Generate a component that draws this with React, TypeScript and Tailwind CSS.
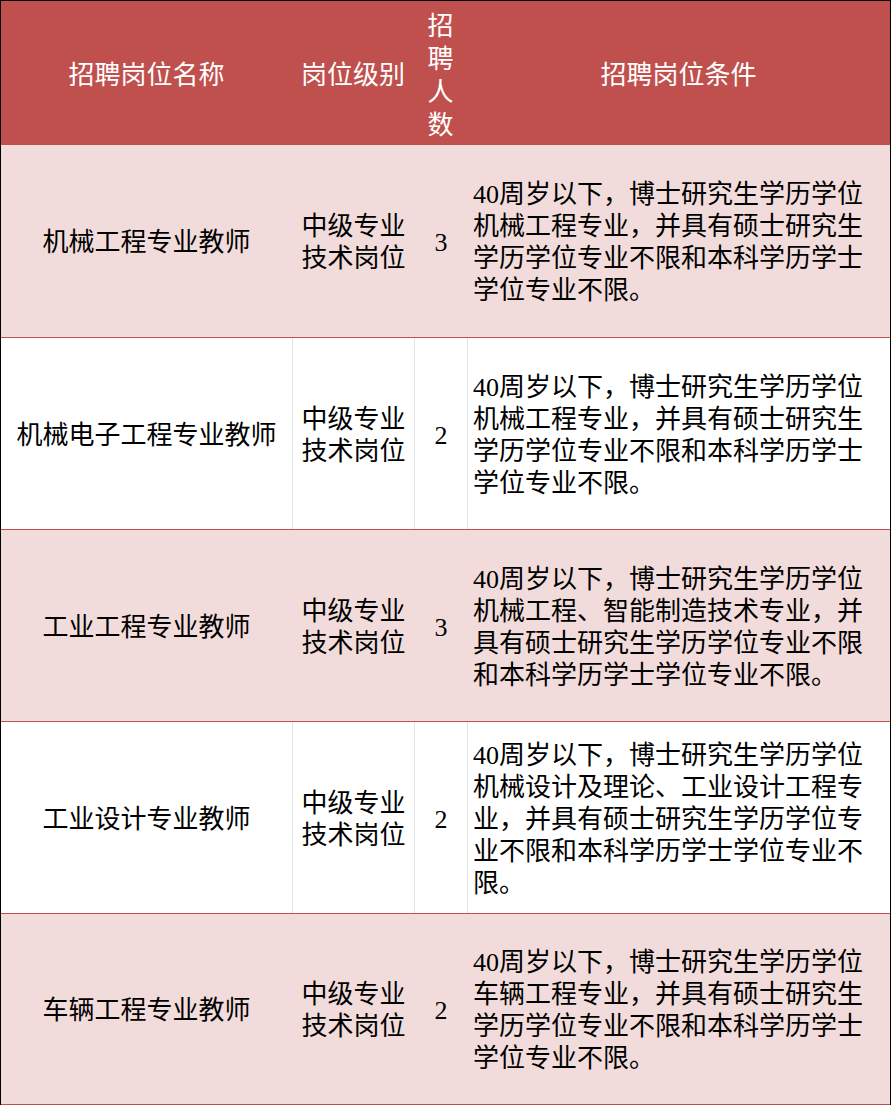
import React from "react";

const rows = [
  {
    name: "机械工程专业教师",
    count: "3",
    cond: "40周岁以下，博士研究生学历学位机械工程专业，并具有硕士研究生学历学位专业不限和本科学历学士学位专业不限。",
  },
  {
    name: "机械电子工程专业教师",
    count: "2",
    cond: "40周岁以下，博士研究生学历学位机械工程专业，并具有硕士研究生学历学位专业不限和本科学历学士学位专业不限。",
  },
  {
    name: "工业工程专业教师",
    count: "3",
    cond: "40周岁以下，博士研究生学历学位机械工程、智能制造技术专业，并具有硕士研究生学历学位专业不限和本科学历学士学位专业不限。",
  },
  {
    name: "工业设计专业教师",
    count: "2",
    cond: "40周岁以下，博士研究生学历学位机械设计及理论、工业设计工程专业，并具有硕士研究生学历学位专业不限和本科学历学士学位专业不限。",
  },
  {
    name: "车辆工程专业教师",
    count: "2",
    cond: "40周岁以下，博士研究生学历学位车辆工程专业，并具有硕士研究生学历学位专业不限和本科学历学士学位专业不限。",
  },
];

const font = { fontFamily: '"Liberation Serif", "Noto Sans CJK SC", serif' };

export default function App() {
  return (
    <div
      className="w-[891px] h-[1105px] bg-white text-[26px] leading-[32px] text-black border-l border-r border-t border-black overflow-hidden"
      style={font}
    >
      {/* header */}
      <div className="grid grid-cols-[291px_122px_53px_423px] h-[144px] bg-[#c0504d] text-white pt-[5px]">
        <div className="flex items-center justify-center">招聘岗位名称</div>
        <div className="flex items-center justify-center">岗位级别</div>
        <div className="flex flex-col items-center justify-center leading-[33px]">
          <span>招</span>
          <span>聘</span>
          <span>人</span>
          <span>数</span>
        </div>
        <div className="flex items-center justify-center">招聘岗位条件</div>
      </div>

      {rows.map((r, i) => {
        const pink = i % 2 === 0;
        const line = pink ? "border-l-[#f2dcdb]" : "border-l-[#e3e3e3]";
        return (
          <div
            key={i}
            className={`grid grid-cols-[291px_122px_53px_423px] h-[192px] border-[#c0504d] pt-[4px] ${
              i > 0 ? "border-t" : ""
            } ${i === rows.length - 1 ? "border-b" : ""} ${pink ? "bg-[#f2dcdb]" : "bg-white"}`}
          >
            <div className="flex items-center justify-center whitespace-nowrap">{r.name}</div>
            <div className={`flex items-center justify-center text-center border-l ${line} -mt-[4px] pt-[4px]`}>
              <div className="w-[104px]">中级专业技术岗位</div>
            </div>
            <div className={`flex items-center justify-center border-l ${line} -mt-[4px] pt-[4px]`}>{r.count}</div>
            <div className={`flex items-center border-l ${line} pl-[5px] pr-[6px] -mt-[4px] pt-[4px]`}>
              <p>{r.cond}</p>
            </div>
          </div>
        );
      })}
    </div>
  );
}
